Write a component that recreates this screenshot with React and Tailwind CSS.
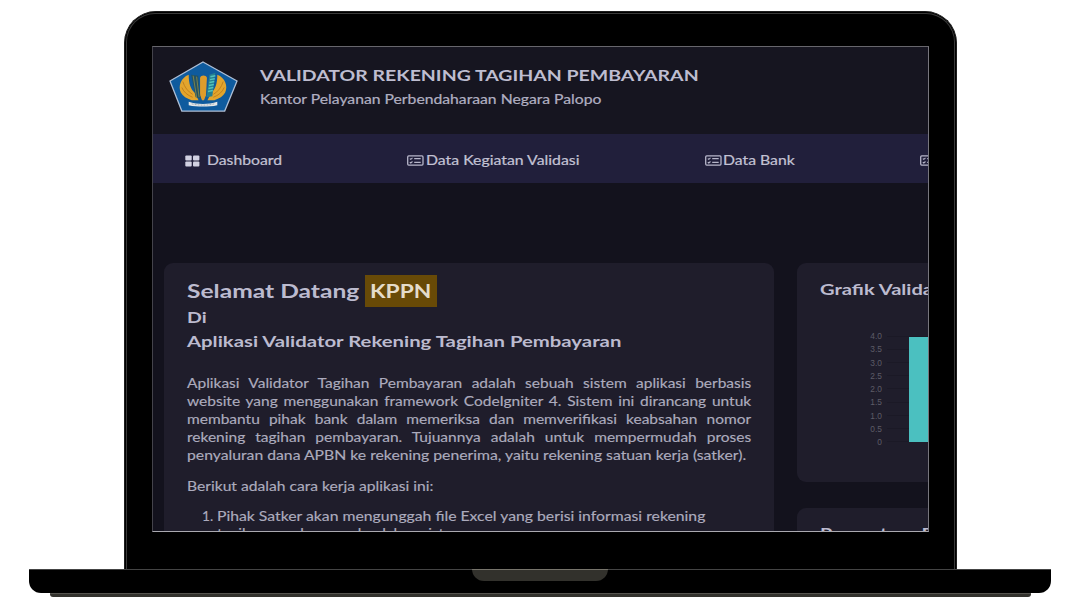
import { useLayoutEffect, useRef, useState } from "react";

// Stretches a single line of text horizontally to the given width.
function Fit({ w, className = "", children }) {
  const ref = useRef(null);
  const [scale, setScale] = useState(1);
  useLayoutEffect(() => {
    const measure = () => setScale(w / ref.current.offsetWidth);
    measure();
    document.fonts.ready.then(measure);
  }, [w]);
  return (
    <div className={className} style={{ width: w }}>
      <span
        ref={ref}
        className="inline-block origin-left whitespace-nowrap"
        style={{ transform: `scaleX(${scale})` }}
      >
        {children}
      </span>
    </div>
  );
}

function Logo() {
  return (
    <svg className="h-[51px] w-[69px] shrink-0" viewBox="0 0 70 52" preserveAspectRatio="none">
      <path d="M34.5 1 69 20.3 56.500 51H13L1 20.3Z" fill="#0f5b9e" stroke="#aebfd6" strokeWidth="1.3" />
      <path d="M20 14C12 17 9 26 12 32c2 4 6 6 11 8h7l-4-8c-4-3-6-9-6-18Z" fill="#e3a52d" />
      <path d="M49 14c8 3 11 12 8 18-2 4-6 6-11 8h-7l4-8c4-3 6-9 6-18Z" fill="#e3a52d" />
      <path d="M14 21c2 6 5 10 10 13M13 27c2 5 6 8 11 10M55 21c-2 6-5 10-10 13M56 27c-2 5-6 8-11 10" stroke="#c27f1c" fill="none" />
      <path d="M31.500 17c1-3 6-3 7 0l-1 18-2 5h-2l-2-5Z" fill="#dd9c2c" />
      <path d="m22.500 14 7 1 2.500 23-5-1Z" fill="#245262" />
      <path d="m24.500 15 3.500 22M28 16l2.500 21" stroke="#8d8f4e" strokeWidth=".8" />
      <path d="m47 12-6 2-3 23 6-1Z" fill="#257f91" />
      <path d="m42 16 5-1m-5.500 4 5-1m-5.500 4 5-1m-5.500 4 5-1m-5.500 4 5-1m-5.500 4 5-1" stroke="#52c3bd" strokeWidth="1.500" />
      <path d="M20 41.500c9 3 20 3 29 0v3.500c-9 2-20 2-29 0Z" fill="#e6e8e9" />
      <path d="M23 43.700c8 1.700 16 1.700 23 0" stroke="#8897a4" strokeWidth=".7" strokeDasharray="2 1" fill="none" />
    </svg>
  );
}

function GridIcon() {
  return (
    <svg className="h-3 w-[15px] shrink-0" viewBox="0 0 15 12" fill="#d2d1e2">
      <rect x="0.300" y="0.500" width="6.400" height="5" rx="1" />
      <rect x="8" y="0.500" width="6.400" height="5" rx="1" />
      <rect x="0.300" y="6.600" width="6.400" height="5" rx="1" />
      <rect x="8" y="6.600" width="6.400" height="5" rx="1" />
    </svg>
  );
}

function ListIcon() {
  return (
    <svg className="h-[11px] w-[17px] shrink-0" viewBox="0 0 17 11" fill="none" stroke="#b6b5c9">
      <rect x=".7" y=".9" width="15.300" height="9.200" rx="1" strokeWidth="1.300" />
      <path d="M7.200 3.700h6.500M7.200 7.300h6.500" strokeWidth="1.200" />
      <path d="m2.800 3.600 1 .8 1.700-1.500M2.800 7.200l1 .8 1.700-1.500" strokeWidth="1.100" />
    </svg>
  );
}

const lines = [
  "Aplikasi Validator Tagihan Pembayaran adalah sebuah sistem aplikasi berbasis",
  "website yang menggunakan framework CodeIgniter 4. Sistem ini dirancang untuk",
  "membantu pihak bank dalam memeriksa dan memverifikasi keabsahan nomor",
  "rekening tagihan pembayaran. Tujuannya adalah untuk mempermudah proses",
];

const ticks = ["4.0", "3.5", "3.0", "2.5", "2.0", "1.5", "1.0", "0.5", "0"];

function Header() {
  return (
    <header className="flex h-[87px] gap-[22px] bg-[#161520] pl-4 pt-[14px]">
      <Logo />
      <div className="pt-[2px] text-[#bebdd0]">
        <Fit w={439} className="text-[15.800px] font-bold leading-6">VALIDATOR REKENING TAGIHAN PEMBAYARAN</Fit>
        <Fit w={342} className="pt-px text-[12.500px] leading-6 text-[#b0afc1] [-webkit-text-stroke:0.200px]">Kantor Pelayanan Perbendaharaan Negara Palopo</Fit>
      </div>
    </header>
  );
}

function Nav() {
  return (
    <nav className="flex h-[49px] items-center bg-[#211f3b] pl-8 pt-[4px] text-[12.700px] leading-[18px] text-[#c3c2d4] [-webkit-text-stroke:0.200px]">
      <div className="flex w-[222px] shrink-0 items-center gap-[7px]">
        <GridIcon />
        <Fit w={74.5} className="pb-[2px]">Dashboard</Fit>
      </div>
      <div className="flex w-[298px] shrink-0 items-center gap-[2px]">
        <ListIcon />
        <Fit w={153.5} className="pb-[2px]">Data Kegiatan Validasi</Fit>
      </div>
      <div className="flex w-[215px] shrink-0 items-center gap-px">
        <ListIcon />
        <Fit w={72} className="pb-[2px]">Data Bank</Fit>
      </div>
      <ListIcon />
    </nav>
  );
}

function Welcome() {
  return (
    <section className="h-[400px] w-[610px] shrink-0 rounded-t-[9px] bg-[#1f1d2b] pl-[23px] pt-3 text-[12.500px] leading-[18px] text-[#acabbd]">
      <div className="flex h-[30px] gap-[6px] text-[18px] font-bold leading-[32px] text-[#bcbbcf]">
        <Fit w={172}>Selamat Datang</Fit>
        <div className="h-8 w-[72px] shrink-0 bg-[#684a07] pl-[5px] text-[#e4dcca]">
          <Fit w={62}>KPPN</Fit>
        </div>
      </div>
      <Fit w={19} className="text-[15.400px] font-bold leading-6 text-[#bcbbcf]">Di</Fit>
      <Fit w={434} className="text-[15.400px] font-bold leading-6 text-[#bcbbcf]">Aplikasi Validator Rekening Tagihan Pembayaran</Fit>
      <div className="[-webkit-text-stroke:0.150px]">
        <div className="mt-[22px]">
          {lines.map((l) => (
            <p key={l} className="w-[455px] origin-left scale-x-[1.240] whitespace-nowrap [text-align-last:justify]">{l}</p>
          ))}
          <Fit w={559}>penyaluran dana APBN ke rekening penerima, yaitu rekening satuan kerja (satker).</Fit>
        </div>
        <Fit w={246.5} className="mt-[13px]">Berikut adalah cara kerja aplikasi ini:</Fit>
        <div className="mt-3 flex gap-1 pl-[15px]">
          <Fit w={11}>1.</Fit>
          <div>
            <Fit w={488}>Pihak Satker akan mengunggah file Excel yang berisi informasi rekening</Fit>
            <Fit w={252} className="-mt-px">tagihan pembayaran ke dalam sistem.</Fit>
          </div>
        </div>
      </div>
    </section>
  );
}

function Charts() {
  return (
    <div className="flex w-[300px] shrink-0 flex-col gap-[26px]">
      <section className="h-[219px] rounded-[9px] bg-[#1f1d2b] pt-[14px]">
        <Fit w={127} className="ml-[23px] text-[15.200px] font-bold leading-6 text-[#bcbbcf]">Grafik Validasi</Fit>
        <div className="mt-[28px] flex gap-[5px]">
          <div className="w-[85px] text-right font-['Liberation_Sans',sans-serif] text-[9.500px] text-[#5d5c67]">
            {ticks.map((t) => (
              <div key={t} className="h-[13.250px] origin-right scale-x-[0.880] leading-[13.250px]">{t}</div>
            ))}
          </div>
          <div className="mt-[7px] h-[106px] flex-1 bg-[repeating-linear-gradient(to_bottom,#1b1926_0px,#1b1926_1px,transparent_1px,transparent_13.125px)] pl-[22px] pt-[1px]">
            <div className="h-[105px] w-[80px] bg-[#4bc0c0]" />
          </div>
        </div>
      </section>
      <section className="h-[150px] rounded-[9px] bg-[#1f1d2b] pt-[13px]">
        <Fit w={146} className="ml-[23px] text-[15.200px] font-bold leading-6 text-[#bcbbcf]">Persentase Bank</Fit>
      </section>
    </div>
  );
}

export default function App() {
  return (
    <div className="h-[608px] w-[1080px] overflow-hidden bg-white pt-[11px] font-['Lato',sans-serif]">
      <div className="ml-[124px] h-[558px] w-[833px] rounded-t-[32px] border border-b-0 border-[#1c1c1c] bg-black px-px pt-px">
        <div className="h-full rounded-t-[29px] border border-b-0 border-[#3a3a3a] pl-[25px] pt-8">
          <div className="h-[486px] w-[777px] overflow-hidden border border-b-[#aaa9b0] border-l-[#44434b] border-r-[#77767d] border-t-[#67666c] bg-[#13121d]">
            <Header />
            <Nav />
            <main className="flex gap-[23px] pl-[11px] pt-20">
              <Welcome />
              <Charts />
            </main>
          </div>
        </div>
      </div>
      <div className="ml-[29px] h-6 w-[1022px] rounded-b-[12px] border-t border-[#444] bg-black">
        <div className="-mt-px ml-[443px] h-3 w-[136px] rounded-b-[12px] border-t border-[#77746b] bg-[#32312c]" />
      </div>
      <div className="ml-[50px] h-1 w-[981px] rounded-b-[3px] border-t border-[#55544f] bg-[#33322d]" />
    </div>
  );
}
